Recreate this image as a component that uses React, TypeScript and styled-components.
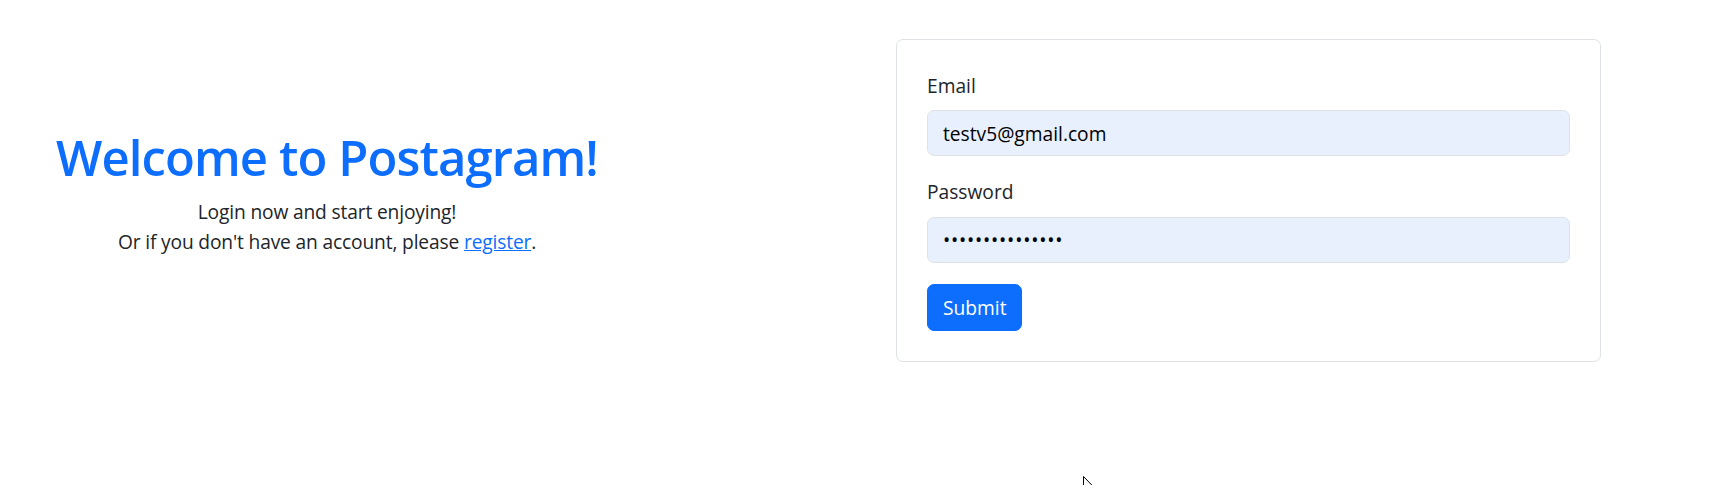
import React from "react";
import styled, { createGlobalStyle } from "styled-components";

const GlobalStyle = createGlobalStyle`
  html, body {
    margin: 0;
    padding: 0;
    background: #ffffff;
    overflow: hidden;
  }
  body {
    font-family: "Open Sans", "Noto Sans", "Liberation Sans", sans-serif;
    font-size: 19.2px;
    line-height: 1.5;
    color: #212529;
  }
  * { box-sizing: border-box; }
`;

const Page = styled.main`
  position: relative;
  display: grid;
  grid-template-columns: 654px 705px;
  column-gap: 242px;
  align-items: start;
  align-content: start;
  padding-top: 39px;
  width: 1712px;
  height: 485px;
`;

const Intro = styled.section`
  text-align: center;
  margin-top: 88.5px;
`;

const Title = styled.h1`
  margin: 0 0 11px;
  font-size: 49px;
  line-height: 1.2;
  font-weight: 600;
  color: #0d6efd;
  letter-spacing: -0.9px;
`;

const Lead = styled.p`
  margin: 0;
  font-size: 19.2px;
  line-height: 29.6px;
  letter-spacing: -0.15px;
  color: #212529;
`;

const Link = styled.a`
  color: #0d6efd;
  text-decoration: underline;
`;

const Card = styled.div`
  border: 1px solid #dee2e6;
  border-radius: 7px;
  padding: 32px 30px 30px;
  background: #fff;
`;

const Form = styled.form`
  display: flex;
  flex-direction: column;
`;

const Group = styled.div`
  margin-bottom: 22px;
`;

const Label = styled.label`
  display: block;
  margin-bottom: 9.6px;
  font-size: 19.2px;
  line-height: 28.8px;
  color: #212529;
`;

const Input = styled.input`
  display: block;
  width: 100%;
  height: 46px;
  padding: 0 15px;
  font-family: inherit;
  font-size: 19.2px;
  color: #000;
  background: #e8f0fe;
  border: 1px solid #dee2e6;
  border-radius: 7px;
  outline: none;

  &[type="password"] {
    letter-spacing: 0.8px;
  }
`;

const Submit = styled.button`
  align-self: flex-start;
  height: 47px;
  padding: 0 15px;
  margin-top: -1px;
  font-family: inherit;
  font-size: 19.2px;
  color: #fff;
  background: #0d6efd;
  border: 1px solid #0d6efd;
  border-radius: 7px;
  cursor: pointer;
`;

const Pointer = styled.svg`
  position: absolute;
  left: 1083px;
  top: 476px;
  width: 12px;
  height: 19px;
  pointer-events: none;
`;

export default function App() {
  return (
    <>
      <GlobalStyle />
      <Page>
        <Intro>
          <Title>Welcome to Postagram!</Title>
          <Lead>Login now and start enjoying!</Lead>
          <Lead>
            Or if you don't have an account, please <Link href="#">register</Link>.
          </Lead>
        </Intro>
        <Card>
          <Form onSubmit={(e) => e.preventDefault()}>
            <Group>
              <Label htmlFor="email">Email</Label>
              <Input id="email" type="email" defaultValue="testv5@gmail.com" readOnly />
            </Group>
            <Group>
              <Label htmlFor="password">Password</Label>
              <Input id="password" type="password" defaultValue="testv5password1" readOnly />
            </Group>
            <Submit type="submit">Submit</Submit>
          </Form>
        </Card>
        <Pointer viewBox="0 0 12 19">
          <path
            d="M0.5 0.5 L0.5 16 L4.2 12.4 L6.8 18.3 L8.9 17.4 L6.4 11.6 L11.3 11.6 Z"
            fill="#fff"
            stroke="#000"
            strokeWidth="1"
            strokeLinejoin="miter"
          />
        </Pointer>
      </Page>
    </>
  );
}
